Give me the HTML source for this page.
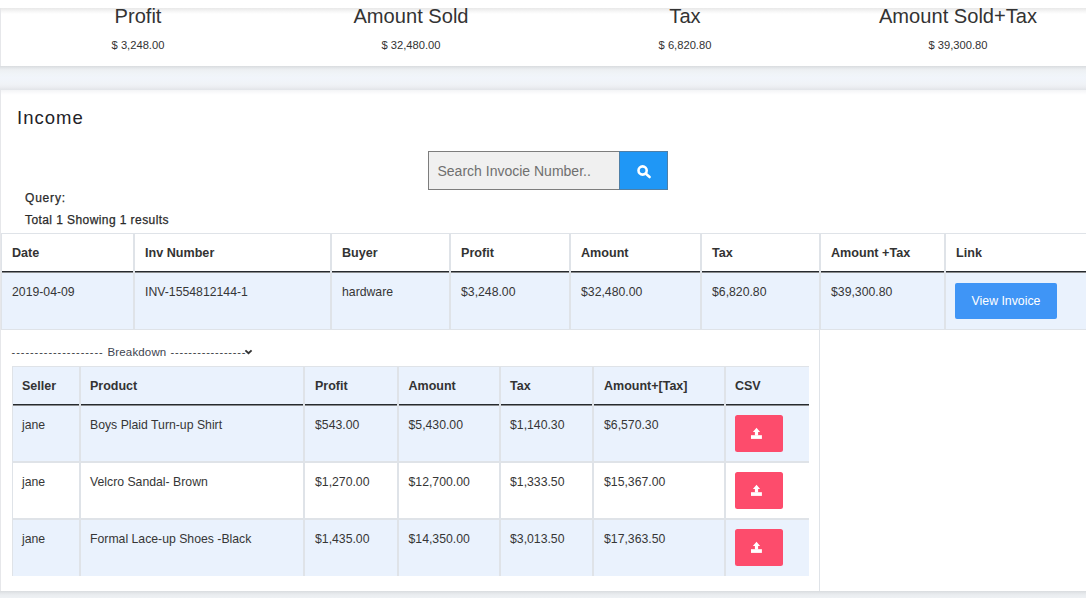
<!DOCTYPE html>
<html><head><meta charset="utf-8">
<style>
*{box-sizing:border-box;margin:0;padding:0}
html,body{width:1086px;height:598px;overflow:hidden}
body{background:#f0f5fb;font-family:"Liberation Sans",sans-serif;color:#333;position:relative}
.t{position:absolute;white-space:nowrap;line-height:1}
.r{position:absolute}
</style></head>
<body>
<div class="r" style="left:0px;top:0px;width:1086px;height:8px;background:#fff;"></div>
<div class="r" style="left:0px;top:8px;width:1086px;height:58px;background:#fff;border-left:1px solid #e6e7ea"></div>
<div class="r" style="left:1px;top:8px;width:1085px;height:6px;background:linear-gradient(#e8e8e8,#f7f7f7 60%,#fff);"></div>
<div class="t" style="left:1px;width:274px;text-align:center;top:6.49px;font-size:20.1px;color:#333">Profit</div>
<div class="t" style="left:1px;width:274px;text-align:center;top:40.46px;font-size:11.2px;color:#333">$ 3,248.00</div>
<div class="t" style="left:274px;width:274px;text-align:center;top:6.49px;font-size:20.1px;color:#333">Amount Sold</div>
<div class="t" style="left:274px;width:274px;text-align:center;top:40.46px;font-size:11.2px;color:#333">$ 32,480.00</div>
<div class="t" style="left:548px;width:274px;text-align:center;top:6.49px;font-size:20.1px;color:#333">Tax</div>
<div class="t" style="left:548px;width:274px;text-align:center;top:40.46px;font-size:11.2px;color:#333">$ 6,820.80</div>
<div class="t" style="left:821px;width:274px;text-align:center;top:6.49px;font-size:20.1px;color:#333">Amount Sold+Tax</div>
<div class="t" style="left:821px;width:274px;text-align:center;top:40.46px;font-size:11.2px;color:#333">$ 39,300.80</div>
<div class="r" style="left:0px;top:66px;width:1086px;height:24px;background:linear-gradient(#d9dcdf 0px,#e4e7ea 2px,#edf0f3 4px,#f0f4f8 8px,#f1f5fb 12px,#f0f3f7 18px,#eceef2 21px,#e5e7eb 23px,#e2e5e9 24px);"></div>
<div class="r" style="left:0px;top:90px;width:1086px;height:501px;background:#fff;border-left:1px solid #e6e7ea"></div>
<div class="r" style="left:1px;top:90px;width:1085px;height:5px;background:linear-gradient(#f3f4f6,#fbfbfc 60%,#fff);"></div>
<div class="r" style="left:0px;top:591px;width:1086px;height:7px;background:linear-gradient(#d9dcdf 0px,#e3e6e9 2px,#eaedf0 4px,#eef1f4 7px);"></div>
<div class="t" style="left:17px;top:108.98px;font-size:18.5px;color:#222228;letter-spacing:1.0px;">Income</div>
<div class="r" style="left:428px;top:151px;width:192px;height:39px;background:#f0f0f0;border:1px solid #7d7d7d;border-right:none"></div>
<div class="t" style="left:437.5px;top:164.32px;font-size:14px;color:#6f6f6f;">Search Invocie Number..</div>
<div class="r" style="left:619px;top:151px;width:49px;height:39px;background:#1f97f6;border:1px solid #4f7fa6"></div>
<svg class="r" style="left:633px;top:161px" width="22" height="22" viewBox="0 0 22 22">
<circle cx="9.6" cy="9.5" r="4.1" fill="none" stroke="#fff" stroke-width="2.6"/>
<line x1="12.6" y1="12.6" x2="16.6" y2="16" stroke="#fff" stroke-width="2.6" stroke-linecap="round"/>
</svg>
<div class="t" style="left:25px;top:192.06px;font-size:12px;color:#2a2a2a;letter-spacing:0.8px;-webkit-text-stroke:0.25px #2a2a2a;">Query:</div>
<div class="t" style="left:25px;top:213.76px;font-size:12px;color:#2a2a2a;letter-spacing:0.42px;-webkit-text-stroke:0.25px #2a2a2a;">Total 1 Showing 1 results</div>
<div class="r" style="left:1px;top:233px;width:1085px;height:1px;background:#dfe3e8;"></div>
<div class="r" style="left:1px;top:273px;width:1085px;height:56px;background:#eaf2fd;"></div>
<div class="r" style="left:1px;top:329px;width:1085px;height:1px;background:#dfe3e8;"></div>
<div class="r" style="left:1px;top:271px;width:132px;height:1px;background:#262a2e;"></div>
<div class="r" style="left:1px;top:272px;width:132px;height:1px;background:rgba(20,24,28,.5);"></div>
<div class="r" style="left:135px;top:271px;width:195px;height:1px;background:#262a2e;"></div>
<div class="r" style="left:135px;top:272px;width:195px;height:1px;background:rgba(20,24,28,.5);"></div>
<div class="r" style="left:332px;top:271px;width:117px;height:1px;background:#262a2e;"></div>
<div class="r" style="left:332px;top:272px;width:117px;height:1px;background:rgba(20,24,28,.5);"></div>
<div class="r" style="left:451px;top:271px;width:118px;height:1px;background:#262a2e;"></div>
<div class="r" style="left:451px;top:272px;width:118px;height:1px;background:rgba(20,24,28,.5);"></div>
<div class="r" style="left:571px;top:271px;width:129px;height:1px;background:#262a2e;"></div>
<div class="r" style="left:571px;top:272px;width:129px;height:1px;background:rgba(20,24,28,.5);"></div>
<div class="r" style="left:702px;top:271px;width:117px;height:1px;background:#262a2e;"></div>
<div class="r" style="left:702px;top:272px;width:117px;height:1px;background:rgba(20,24,28,.5);"></div>
<div class="r" style="left:821px;top:271px;width:123px;height:1px;background:#262a2e;"></div>
<div class="r" style="left:821px;top:272px;width:123px;height:1px;background:rgba(20,24,28,.5);"></div>
<div class="r" style="left:946px;top:271px;width:140px;height:1px;background:#262a2e;"></div>
<div class="r" style="left:946px;top:272px;width:140px;height:1px;background:rgba(20,24,28,.5);"></div>
<div class="r" style="left:1px;top:233px;width:1px;height:97px;background:#dfe3e8;"></div>
<div class="r" style="left:133px;top:233px;width:2px;height:97px;background:#dfe3e8;"></div>
<div class="r" style="left:330px;top:233px;width:2px;height:97px;background:#dfe3e8;"></div>
<div class="r" style="left:449px;top:233px;width:2px;height:97px;background:#dfe3e8;"></div>
<div class="r" style="left:569px;top:233px;width:2px;height:97px;background:#dfe3e8;"></div>
<div class="r" style="left:700px;top:233px;width:2px;height:97px;background:#dfe3e8;"></div>
<div class="r" style="left:819px;top:233px;width:2px;height:97px;background:#dfe3e8;"></div>
<div class="r" style="left:944px;top:233px;width:2px;height:97px;background:#dfe3e8;"></div>
<div class="r" style="left:819px;top:330px;width:1px;height:261px;background:#dfe3e8;"></div>
<div class="t" style="left:12px;top:247.09px;font-size:12.6px;font-weight:bold;color:#333;">Date</div>
<div class="t" style="left:145px;top:247.09px;font-size:12.6px;font-weight:bold;color:#333;">Inv Number</div>
<div class="t" style="left:342px;top:247.09px;font-size:12.6px;font-weight:bold;color:#333;">Buyer</div>
<div class="t" style="left:461px;top:247.09px;font-size:12.6px;font-weight:bold;color:#333;">Profit</div>
<div class="t" style="left:581px;top:247.09px;font-size:12.6px;font-weight:bold;color:#333;">Amount</div>
<div class="t" style="left:712px;top:247.09px;font-size:12.6px;font-weight:bold;color:#333;">Tax</div>
<div class="t" style="left:831px;top:247.09px;font-size:12.6px;font-weight:bold;color:#333;">Amount +Tax</div>
<div class="t" style="left:956px;top:247.09px;font-size:12.6px;font-weight:bold;color:#333;">Link</div>
<div class="t" style="left:12px;top:285.83px;font-size:12.25px;color:#363636;">2019-04-09</div>
<div class="t" style="left:145px;top:285.83px;font-size:12.25px;color:#363636;">INV-1554812144-1</div>
<div class="t" style="left:342px;top:285.83px;font-size:12.25px;color:#363636;">hardware</div>
<div class="t" style="left:461px;top:285.83px;font-size:12.25px;color:#363636;">$3,248.00</div>
<div class="t" style="left:581px;top:285.83px;font-size:12.25px;color:#363636;">$32,480.00</div>
<div class="t" style="left:712px;top:285.83px;font-size:12.25px;color:#363636;">$6,820.80</div>
<div class="t" style="left:831px;top:285.83px;font-size:12.25px;color:#363636;">$39,300.80</div>
<div class="r" style="left:955px;top:283px;width:102px;height:36px;background:#3f95f6;border-radius:2px"></div>
<div class="t" style="left:955px;width:102px;text-align:center;top:294.82px;font-size:12.3px;color:#fff">View Invoice</div>
<div class="t" style="left:11.6px;top:347.08px;font-size:11px;color:#3a3e44;letter-spacing:0.94px;">--------------------</div>
<div class="t" style="left:107.5px;top:347.22px;font-size:11.5px;color:#3d4450;letter-spacing:0.15px;">Breakdown</div>
<div class="t" style="left:170.6px;top:347.08px;font-size:11px;color:#3a3e44;letter-spacing:0.78px;">-----------------</div>
<svg class="r" style="left:244px;top:348px" width="9" height="8" viewBox="0 0 9 8">
<polyline points="1.4,2.4 4.5,5.2 7.6,2.4" fill="none" stroke="#333" stroke-width="1.9"/>
</svg>
<div class="r" style="left:12px;top:366px;width:797px;height:1px;background:#dfe3e8;"></div>
<div class="r" style="left:13px;top:367px;width:796px;height:37px;background:#eaf2fd;"></div>
<div class="r" style="left:12px;top:404px;width:67px;height:1px;background:#262a2e;"></div>
<div class="r" style="left:12px;top:405px;width:67px;height:1px;background:rgba(20,24,28,.5);"></div>
<div class="r" style="left:81px;top:404px;width:222px;height:1px;background:#262a2e;"></div>
<div class="r" style="left:81px;top:405px;width:222px;height:1px;background:rgba(20,24,28,.5);"></div>
<div class="r" style="left:305px;top:404px;width:92px;height:1px;background:#262a2e;"></div>
<div class="r" style="left:305px;top:405px;width:92px;height:1px;background:rgba(20,24,28,.5);"></div>
<div class="r" style="left:399px;top:404px;width:100px;height:1px;background:#262a2e;"></div>
<div class="r" style="left:399px;top:405px;width:100px;height:1px;background:rgba(20,24,28,.5);"></div>
<div class="r" style="left:501px;top:404px;width:91px;height:1px;background:#262a2e;"></div>
<div class="r" style="left:501px;top:405px;width:91px;height:1px;background:rgba(20,24,28,.5);"></div>
<div class="r" style="left:594px;top:404px;width:130px;height:1px;background:#262a2e;"></div>
<div class="r" style="left:594px;top:405px;width:130px;height:1px;background:rgba(20,24,28,.5);"></div>
<div class="r" style="left:726px;top:404px;width:83px;height:1px;background:#262a2e;"></div>
<div class="r" style="left:726px;top:405px;width:83px;height:1px;background:rgba(20,24,28,.5);"></div>
<div class="r" style="left:13px;top:406px;width:796px;height:55px;background:#eaf2fd;"></div>
<div class="r" style="left:13px;top:463px;width:796px;height:55px;background:#fff;"></div>
<div class="r" style="left:13px;top:520px;width:796px;height:56px;background:#eaf2fd;"></div>
<div class="r" style="left:12px;top:461px;width:797px;height:2px;background:#dfe3e8;"></div>
<div class="r" style="left:12px;top:518px;width:797px;height:2px;background:#dfe3e8;"></div>
<div class="r" style="left:12px;top:366px;width:1px;height:210px;background:#dfe3e8;"></div>
<div class="r" style="left:79px;top:366px;width:2px;height:210px;background:#dfe3e8;"></div>
<div class="r" style="left:303px;top:366px;width:2px;height:210px;background:#dfe3e8;"></div>
<div class="r" style="left:397px;top:366px;width:2px;height:210px;background:#dfe3e8;"></div>
<div class="r" style="left:499px;top:366px;width:2px;height:210px;background:#dfe3e8;"></div>
<div class="r" style="left:592px;top:366px;width:2px;height:210px;background:#dfe3e8;"></div>
<div class="r" style="left:724px;top:366px;width:2px;height:210px;background:#dfe3e8;"></div>
<div class="t" style="left:22px;top:380.10px;font-size:12.5px;font-weight:bold;color:#333;">Seller</div>
<div class="t" style="left:90px;top:380.10px;font-size:12.5px;font-weight:bold;color:#333;">Product</div>
<div class="t" style="left:315px;top:380.10px;font-size:12.5px;font-weight:bold;color:#333;">Profit</div>
<div class="t" style="left:408.5px;top:380.10px;font-size:12.5px;font-weight:bold;color:#333;">Amount</div>
<div class="t" style="left:510px;top:380.10px;font-size:12.5px;font-weight:bold;color:#333;">Tax</div>
<div class="t" style="left:604px;top:380.10px;font-size:12.5px;font-weight:bold;color:#333;">Amount+[Tax]</div>
<div class="t" style="left:735px;top:380.10px;font-size:12.5px;font-weight:bold;color:#333;">CSV</div>
<div class="t" style="left:22px;top:419.03px;font-size:12.25px;color:#363636;">jane</div>
<div class="t" style="left:90px;top:419.03px;font-size:12.25px;color:#363636;">Boys Plaid Turn-up Shirt</div>
<div class="t" style="left:315px;top:419.03px;font-size:12.25px;color:#363636;">$543.00</div>
<div class="t" style="left:408.5px;top:419.03px;font-size:12.25px;color:#363636;">$5,430.00</div>
<div class="t" style="left:510px;top:419.03px;font-size:12.25px;color:#363636;">$1,140.30</div>
<div class="t" style="left:604px;top:419.03px;font-size:12.25px;color:#363636;">$6,570.30</div>
<div class="r" style="left:735px;top:415px;width:48px;height:37px;background:#fd4c6c;border-radius:2.5px"></div>
<svg class="r" style="left:749px;top:426px" width="16" height="16" viewBox="0 0 16 16">
<path d="M7.5 1.8 L11.1 5.9 L9.1 5.9 L9.1 9.4 L5.9 9.4 L5.9 5.9 L3.9 5.9 Z" fill="#fff"/>
<rect x="2" y="9.2" width="10.9" height="3.7" fill="#fff"/>
</svg>
<div class="t" style="left:22px;top:476.03px;font-size:12.25px;color:#363636;">jane</div>
<div class="t" style="left:90px;top:476.03px;font-size:12.25px;color:#363636;">Velcro Sandal- Brown</div>
<div class="t" style="left:315px;top:476.03px;font-size:12.25px;color:#363636;">$1,270.00</div>
<div class="t" style="left:408.5px;top:476.03px;font-size:12.25px;color:#363636;">$12,700.00</div>
<div class="t" style="left:510px;top:476.03px;font-size:12.25px;color:#363636;">$1,333.50</div>
<div class="t" style="left:604px;top:476.03px;font-size:12.25px;color:#363636;">$15,367.00</div>
<div class="r" style="left:735px;top:472px;width:48px;height:37px;background:#fd4c6c;border-radius:2.5px"></div>
<svg class="r" style="left:749px;top:483px" width="16" height="16" viewBox="0 0 16 16">
<path d="M7.5 1.8 L11.1 5.9 L9.1 5.9 L9.1 9.4 L5.9 9.4 L5.9 5.9 L3.9 5.9 Z" fill="#fff"/>
<rect x="2" y="9.2" width="10.9" height="3.7" fill="#fff"/>
</svg>
<div class="t" style="left:22px;top:533.03px;font-size:12.25px;color:#363636;">jane</div>
<div class="t" style="left:90px;top:533.03px;font-size:12.25px;color:#363636;">Formal Lace-up Shoes -Black</div>
<div class="t" style="left:315px;top:533.03px;font-size:12.25px;color:#363636;">$1,435.00</div>
<div class="t" style="left:408.5px;top:533.03px;font-size:12.25px;color:#363636;">$14,350.00</div>
<div class="t" style="left:510px;top:533.03px;font-size:12.25px;color:#363636;">$3,013.50</div>
<div class="t" style="left:604px;top:533.03px;font-size:12.25px;color:#363636;">$17,363.50</div>
<div class="r" style="left:735px;top:529px;width:48px;height:37px;background:#fd4c6c;border-radius:2.5px"></div>
<svg class="r" style="left:749px;top:540px" width="16" height="16" viewBox="0 0 16 16">
<path d="M7.5 1.8 L11.1 5.9 L9.1 5.9 L9.1 9.4 L5.9 9.4 L5.9 5.9 L3.9 5.9 Z" fill="#fff"/>
<rect x="2" y="9.2" width="10.9" height="3.7" fill="#fff"/>
</svg>
</body></html>
